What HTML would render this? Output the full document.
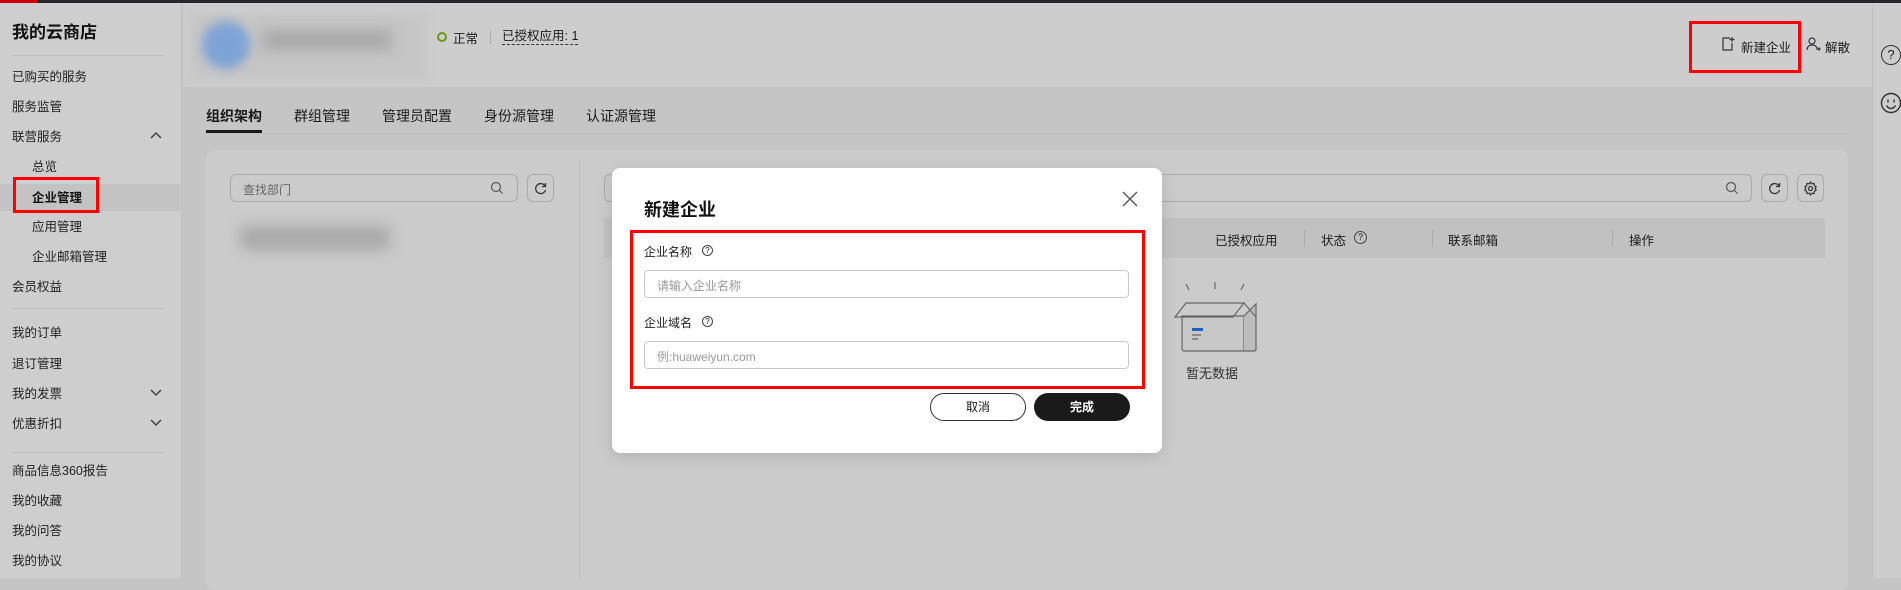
<!DOCTYPE html>
<html><head><meta charset="utf-8"><style>
*{margin:0;padding:0;box-sizing:border-box}
body{width:1901px;height:578px;overflow:hidden;background:#c5c5c5;font-family:"Liberation Sans","Noto Sans CJK SC",sans-serif;color:#1a1a1a;position:relative}
.a{position:absolute;white-space:nowrap}
.side{left:0;top:3px;width:182px;height:575px;background:#cecece;border-right:1px solid #c2c2c2}
.si{position:absolute;left:12px;font-size:12.5px;color:#222}
.sub{left:32px}
</style></head><body>
<div class="a" style="left:0;top:0;width:1901px;height:3px;background:#25272c"></div>
<div class="a" style="left:0;top:0;width:38px;height:3px;background:#c7000b"></div>

<div class="a side">
<div class="si" style="top:15px;font-size:17px;font-weight:bold;color:#111">我的云商店</div>
<div class="a" style="left:12px;top:52px;width:152px;height:1px;background:#bdbdbd"></div>
<div class="si" style="top:63px">已购买的服务</div>
<div class="si" style="top:93px">服务监管</div>
<div class="si" style="top:123px">联营服务</div>
<svg class="a" style="left:150px;top:128px" width="12" height="8" viewBox="0 0 12 8" fill="none" stroke="#333" stroke-width="1.3"><path d="M1 7l5-5 5 5"/></svg>
<div class="si sub" style="top:153px">总览</div>
<div class="a" style="left:0;top:181px;width:180px;height:27px;background:#c3c3c3"></div>
<div class="si sub" style="top:184px;font-weight:bold;color:#111">企业管理</div>
<div class="a" style="left:13px;top:174px;width:86px;height:36px;border:3px solid #f00"></div>
<div class="si sub" style="top:213px">应用管理</div>
<div class="si sub" style="top:243px">企业邮箱管理</div>
<div class="si" style="top:273px">会员权益</div>
<div class="a" style="left:12px;top:305px;width:152px;height:1px;background:#bdbdbd"></div>
<div class="si" style="top:319px">我的订单</div>
<div class="si" style="top:350px">退订管理</div>
<div class="si" style="top:380px">我的发票</div>
<svg class="a" style="left:150px;top:386px" width="12" height="8" viewBox="0 0 12 8" fill="none" stroke="#333" stroke-width="1.3"><path d="M1 1l5 5 5-5"/></svg>
<div class="si" style="top:410px">优惠折扣</div>
<svg class="a" style="left:150px;top:416px" width="12" height="8" viewBox="0 0 12 8" fill="none" stroke="#333" stroke-width="1.3"><path d="M1 1l5 5 5-5"/></svg>
<div class="a" style="left:12px;top:449px;width:152px;height:1px;background:#bdbdbd"></div>
<div class="si" style="top:457px">商品信息360报告</div>
<div class="si" style="top:487px">我的收藏</div>
<div class="si" style="top:517px">我的问答</div>
<div class="si" style="top:547px">我的协议</div>
</div>

<!-- header -->
<div class="a" style="left:183px;top:3px;width:1689px;height:84px;background:#cdcdcd"></div>
<div class="a" style="left:190px;top:13px;width:238px;height:66px;background:#c6c6c6;filter:blur(4px)"></div>
<div class="a" style="left:202px;top:21px;width:48px;height:48px;border-radius:50%;background:#7fa3d6;filter:blur(5px)"></div>
<div class="a" style="left:262px;top:30px;width:130px;height:20px;background:#a8a8a8;filter:blur(7px)"></div>
<div class="a" style="left:437px;top:32px;width:10px;height:10px;border:2px solid #6a9a1a;border-radius:50%"></div>
<div class="a" style="left:453px;top:28px;font-size:12.5px">正常</div>
<div class="a" style="left:490px;top:30px;width:1px;height:14px;background:#aaa"></div>
<div class="a" style="left:502px;top:28px;font-size:12.5px;border-bottom:1px dashed #333;line-height:16px">已授权应用: 1</div>

<svg class="a" style="left:1720px;top:36px" width="16" height="16" viewBox="0 0 16 16" fill="none" stroke="#333" stroke-width="1.2"><path d="M10 2H3v12h9V7"/><path d="M12 1v5M9.5 3.5h5"/></svg>
<div class="a" style="left:1741px;top:37px;font-size:12.5px">新建企业</div>
<div class="a" style="left:1689px;top:21px;width:112px;height:52px;border:3px solid #f00"></div>
<svg class="a" style="left:1805px;top:36px" width="16" height="16" viewBox="0 0 16 16" fill="none" stroke="#333" stroke-width="1.2"><circle cx="7" cy="5" r="3"/><path d="M2 14c0-3 2-5 5-5s4 1 5 3M11 13h4M13.5 11.5l1.5 1.5-1.5 1.5"/></svg>
<div class="a" style="left:1825px;top:37px;font-size:12.5px">解散</div>

<!-- right rail -->
<div class="a" style="left:1872px;top:3px;width:29px;height:575px;background:#cdcdcd;border-left:1px solid #c0c0c0"></div>
<div class="a" style="left:1881px;top:45px;width:20px;height:20px;border:1.5px solid #333;border-radius:50%;font-size:13px;line-height:17px;text-align:center">?</div>
<svg class="a" style="left:1880px;top:92px" width="22" height="22" viewBox="0 0 22 22" fill="none" stroke="#333" stroke-width="1.4"><circle cx="11" cy="11" r="9.5"/><path d="M8 7.5v3M14 7.5v3"/><path d="M6.5 13.5c1.2 2 2.7 3 4.5 3s3.3-1 4.5-3"/></svg>

<!-- tabs -->
<div class="a" style="left:206px;top:106px;font-size:14px;font-weight:bold">组织架构</div>
<div class="a" style="left:206px;top:130px;width:56px;height:3px;background:#1a1a1a"></div>
<div class="a" style="left:294px;top:106px;font-size:14px">群组管理</div>
<div class="a" style="left:382px;top:106px;font-size:14px">管理员配置</div>
<div class="a" style="left:484px;top:106px;font-size:14px">身份源管理</div>
<div class="a" style="left:586px;top:106px;font-size:14px">认证源管理</div>
<div class="a" style="left:206px;top:133px;width:1641px;height:1px;background:#bdbdbd"></div>

<!-- card -->
<div class="a" style="left:206px;top:150px;width:1642px;height:440px;background:#cbcbcb;border-radius:8px"></div>
<div class="a" style="left:230px;top:174px;width:288px;height:28px;border:1px solid #a9a9a9;border-radius:6px"></div>
<div class="a" style="left:243px;top:181px;font-size:12px;color:#666">查找部门</div>
<svg class="a" style="left:490px;top:181px" width="14" height="14" viewBox="0 0 14 14" fill="none" stroke="#555" stroke-width="1.2"><circle cx="6" cy="6" r="4.5"/><path d="M9.5 9.5l3 3"/></svg>
<div class="a" style="left:527px;top:174px;width:27px;height:28px;border:1px solid #a9a9a9;border-radius:6px"></div>
<svg class="a" style="left:533px;top:181px" width="15" height="15" viewBox="0 0 15 15" fill="none" stroke="#333" stroke-width="1.3"><path d="M12 5A5 5 0 1 0 12.5 9"/><path d="M12.5 2v3.5H9"/></svg>
<div class="a" style="left:579px;top:160px;width:1px;height:418px;background:#bdbdbd"></div>
<div class="a" style="left:240px;top:226px;width:150px;height:24px;background:#a9a9a9;filter:blur(7px)"></div>

<div class="a" style="left:604px;top:174px;width:1148px;height:28px;border:1px solid #a9a9a9;border-radius:6px"></div>
<svg class="a" style="left:1725px;top:181px" width="14" height="14" viewBox="0 0 14 14" fill="none" stroke="#555" stroke-width="1.2"><circle cx="6" cy="6" r="4.5"/><path d="M9.5 9.5l3 3"/></svg>
<div class="a" style="left:1761px;top:174px;width:27px;height:28px;border:1px solid #a9a9a9;border-radius:6px"></div>
<svg class="a" style="left:1767px;top:181px" width="15" height="15" viewBox="0 0 15 15" fill="none" stroke="#333" stroke-width="1.3"><path d="M12 5A5 5 0 1 0 12.5 9"/><path d="M12.5 2v3.5H9"/></svg>
<div class="a" style="left:1797px;top:174px;width:27px;height:28px;border:1px solid #a9a9a9;border-radius:6px"></div>
<svg class="a" style="left:1803px;top:181px" width="15" height="15" viewBox="0 0 15 15" fill="none" stroke="#333" stroke-width="1.2"><path d="M7.5 1l1.3 1.8 2.2-.4.4 2.2 1.8 1.3-1.1 1.6 1.1 1.6-1.8 1.3-.4 2.2-2.2-.4L7.5 14l-1.3-1.8-2.2.4-.4-2.2L1.8 9.1 2.9 7.5 1.8 5.9 3.6 4.6 4 2.4l2.2.4z"/><circle cx="7.5" cy="7.5" r="2"/></svg>

<div class="a" style="left:604px;top:218px;width:1221px;height:40px;background:#c1c1c1"></div>
<div class="a" style="left:1215px;top:230px;font-size:12.5px">已授权应用</div>
<div class="a" style="left:1304px;top:230px;width:1px;height:16px;background:#aaa"></div>
<div class="a" style="left:1321px;top:230px;font-size:12.5px">状态</div>
<div class="a" style="left:1354px;top:231px;width:13px;height:13px;border:1px solid #444;border-radius:50%;font-size:9px;line-height:11px;text-align:center">?</div>
<div class="a" style="left:1432px;top:230px;width:1px;height:16px;background:#aaa"></div>
<div class="a" style="left:1448px;top:230px;font-size:12.5px">联系邮箱</div>
<div class="a" style="left:1612px;top:230px;width:1px;height:16px;background:#aaa"></div>
<div class="a" style="left:1629px;top:230px;font-size:12.5px">操作</div>

<svg class="a" style="left:1172px;top:282px" width="86" height="72" viewBox="0 0 86 72" fill="none" stroke="#666" stroke-width="1.2"><path d="M14 2l3 6M43 0v7M72 2l-3 6"/><path d="M10 34h62V69H12a2 2 0 0 1-2-2z" fill="#c8c8c8"/><path d="M72 34l12-12v45a2 2 0 0 1-2 2H72" fill="#bdbdbd"/><path d="M3 35l11-14h58L61 35zM72 21l12 14"/><rect x="20" y="46" width="11" height="3" fill="#1f5fcc" stroke="none"/><path d="M20 53h9M20 57h6"/></svg>
<div class="a" style="left:1186px;top:363px;font-size:13px;color:#333">暂无数据</div>

<!-- modal -->
<div class="a" style="left:612px;top:168px;width:550px;height:285px;background:#fff;border-radius:8px;box-shadow:0 4px 16px rgba(0,0,0,.12)"></div>
<div class="a" style="left:644px;top:196px;font-size:18px;font-weight:bold;color:#111">新建企业</div>
<svg class="a" style="left:1122px;top:191px" width="16" height="16" viewBox="0 0 16 16" stroke="#555" stroke-width="1.4"><path d="M1 1l14 14M15 1L1 15"/></svg>
<div class="a" style="left:630px;top:230px;width:515px;height:159px;border:3px solid #f00"></div>
<div class="a" style="left:644px;top:243px;font-size:12px;color:#222">企业名称</div>
<div class="a" style="left:702px;top:245px;width:11px;height:11px;border:1px solid #444;border-radius:50%;font-size:8px;line-height:9px;text-align:center">?</div>
<div class="a" style="left:644px;top:270px;width:485px;height:28px;border:1px solid #c8c8c8;border-radius:4px"></div>
<div class="a" style="left:657px;top:277px;font-size:12px;color:#999">请输入企业名称</div>
<div class="a" style="left:644px;top:314px;font-size:12px;color:#222">企业域名</div>
<div class="a" style="left:702px;top:316px;width:11px;height:11px;border:1px solid #444;border-radius:50%;font-size:8px;line-height:9px;text-align:center">?</div>
<div class="a" style="left:644px;top:341px;width:485px;height:28px;border:1px solid #c8c8c8;border-radius:4px"></div>
<div class="a" style="left:657px;top:348px;font-size:12px;color:#999">例:huaweiyun.com</div>
<div class="a" style="left:930px;top:393px;width:96px;height:28px;border:1px solid #333;border-radius:14px;font-size:12px;line-height:26px;text-align:center">取消</div>
<div class="a" style="left:1034px;top:393px;width:96px;height:28px;background:#1a1a1a;border-radius:14px;font-size:12px;line-height:28px;text-align:center;color:#fff;font-weight:bold">完成</div>
</body></html>
